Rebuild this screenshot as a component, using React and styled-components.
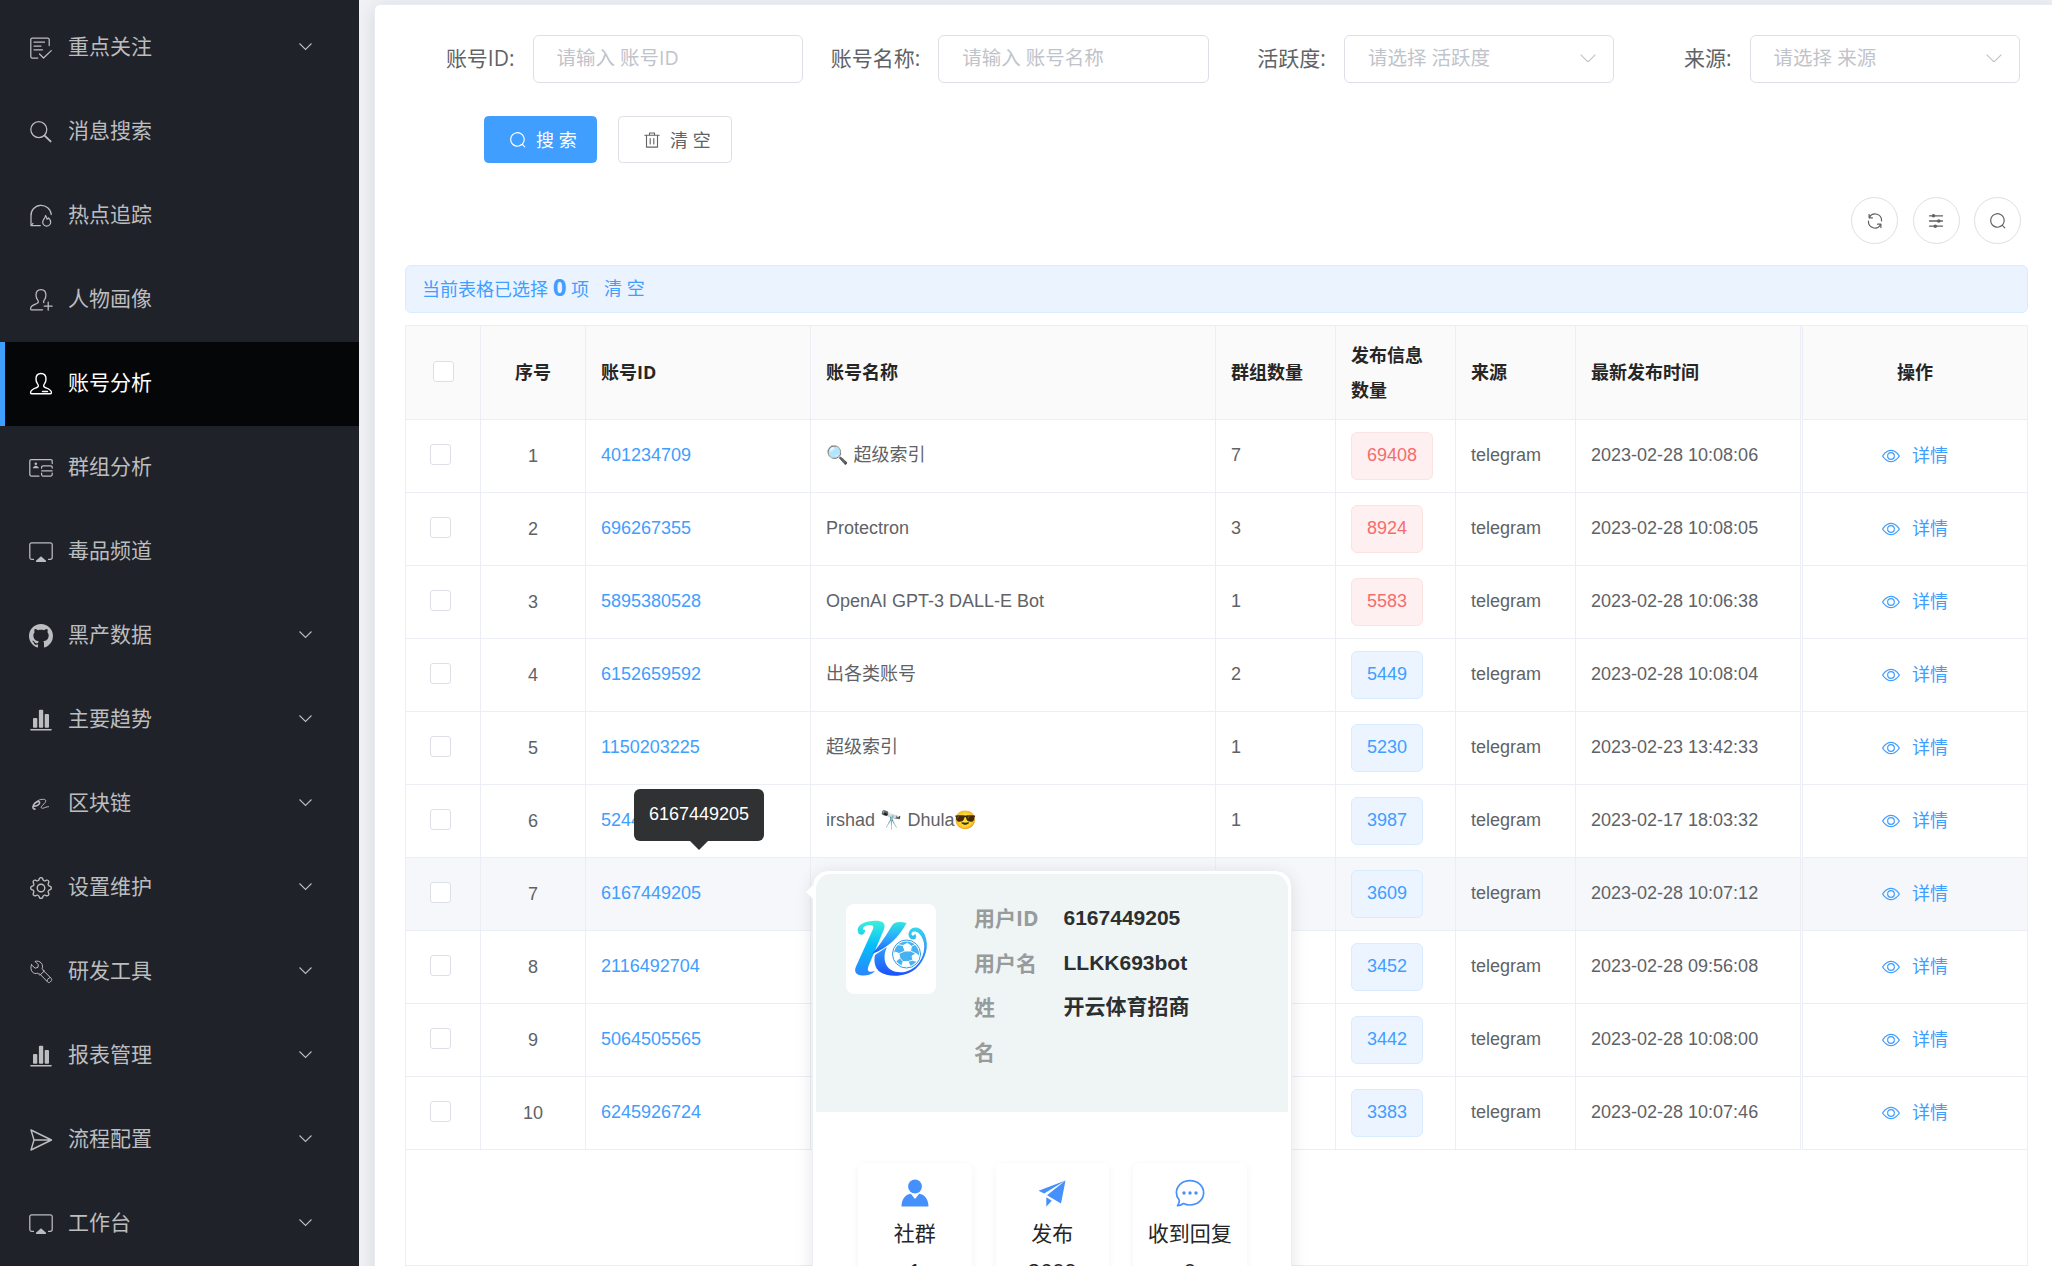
import React from "react";
import styled, { createGlobalStyle, css } from "styled-components";
import { BsGear } from "react-icons/bs";

const latin = `"Liberation Sans", "Noto Sans CJK SC", "Noto Color Emoji", sans-serif`;
const mixed = `"Open Sans", "Noto Sans CJK SC", sans-serif`;

const GlobalStyle = createGlobalStyle`
  *, *::before, *::after { box-sizing: border-box; }
  html, body { margin: 0; height: 100%; overflow: hidden; }
  body { background: #f0f2f5; font-family: ${latin}; color: #606266; font-size: 18px; }
`;

const Page = styled.div`
  position: relative;
  display: flex;
  width: 2052px;
  height: 1266px;
  overflow: hidden;
  background: #f0f1f5;
`;

/* ---------- sidebar ---------- */
const Sidebar = styled.nav`
  flex: none;
  width: 359px;
  padding-top: 6px;
  background: #20222a;
  z-index: 1;
`;

const MenuItem = styled.div`
  display: flex;
  align-items: center;
  height: 84px;
  padding: 0 47px 0 29px;
  color: ${(p) => (p.$active ? "#fff" : "#bcbdbf")};
  ${(p) =>
    p.$active &&
    css`
      background: #050608;
      box-shadow: inset 5px 0 0 #409eff;
    `}
  svg { display: block; flex: none; }
`;

const MenuLabel = styled.span`
  flex: 1;
  margin-left: 15px;
  font-size: 21px;
  line-height: 30px;
  padding-bottom: 2px;
`;

const ChevronBox = styled.span`
  padding-bottom: 2px;
`;

/* ---------- main card ---------- */
const Main = styled.main`
  flex: none;
  width: 1700px;
  padding: 4px 0 0 15px;
`;

const Card = styled.section`
  width: 1685px;
  height: 1300px;
  padding: 30px;
  border: 1px solid #e6ebf5;
  border-radius: 6px;
  background: #fff;
  box-shadow: 0 3px 18px rgba(0, 0, 0, 0.1);
`;

const SearchForm = styled.div`
  display: grid;
  grid-template-columns: repeat(4, 405.7px);
`;

const Field = styled.label`
  display: flex;
  align-items: center;
  height: 48px;
`;

const FieldLabel = styled.span`
  flex: none;
  width: 127.5px;
  padding-right: 18px;
  padding-bottom: 2px;
  text-align: right;
  font-family: ${mixed};
  font-size: 21px;
  line-height: 30px;
  color: #606266;
`;

const FieldBox = styled.span`
  display: flex;
  align-items: center;
  justify-content: space-between;
  width: 270.5px;
  height: 48px;
  padding: 0 17px 2px 23px;
  border: 1px solid #dcdfe6;
  border-radius: 6px;
  font-family: ${mixed};
  font-size: 19.5px;
  line-height: 28px;
  color: #bfc3cb;
`;

const FormActions = styled.div`
  display: flex;
  gap: 21px;
  margin-top: 33px;
  padding-left: 79px;
`;

const Button = styled.button`
  display: flex;
  align-items: center;
  width: ${(p) => (p.$primary ? 113 : 114)}px;
  height: 47px;
  padding: 0 0 0 24px;
  gap: 9px;
  border: 1px solid ${(p) => (p.$primary ? "#409eff" : "#dcdfe6")};
  border-radius: 4.5px;
  background: ${(p) => (p.$primary ? "#409eff" : "#fff")};
  color: ${(p) => (p.$primary ? "#fff" : "#606266")};
  font-family: ${mixed};
  font-size: 18px;
  line-height: 24px;
  white-space: nowrap;
`;

const Toolbar = styled.div`
  display: flex;
  justify-content: flex-end;
  gap: 14.5px;
  margin-top: 34px;
  padding-right: 7px;
`;

const RoundButton = styled.button`
  display: grid;
  place-items: center;
  width: 47px;
  height: 47px;
  padding: 0;
  border: 1px solid #dcdfe6;
  border-radius: 50%;
  background: #fff;
  color: #606266;
`;

const SelectionBar = styled.div`
  display: flex;
  align-items: center;
  height: 48px;
  margin-top: 21px;
  padding: 0 16px 2px;
  border: 1px solid #d9ecff;
  border-radius: 6px;
  background: #ebf3ff;
  color: #409eff;
  font-family: ${mixed};
  font-size: 18px;
  line-height: 34px;
  white-space: pre;
`;

const SelectionCount = styled.b`
  font-size: 24px;
  font-weight: 700;
`;

const ClearLink = styled.a`
  margin-left: 15px;
`;

/* ---------- table ---------- */
const Table = styled.div`
  height: 941px;
  margin-top: 12px;
  border: 1px solid #ebeef5;
`;

const columns = "75px 105px 225px 405px 120px 120px 120px 225px 1fr";

const Row = styled.div`
  display: grid;
  grid-template-columns: ${columns};
  height: 73px;
  background: ${(p) => (p.$hover ? "#f5f7fa" : "#fff")};
`;

const HeadRow = styled(Row)`
  height: 94px;
  background: #fafafa;
  color: #262626;
  font-weight: 700;
  font-family: ${mixed};
`;

const Cell = styled.div`
  display: flex;
  align-items: center;
  justify-content: ${(p) => (p.$center ? "center" : "flex-start")};
  min-width: 0;
  padding: ${(p) => (p.$center ? "0" : "0 15px")};
  padding-bottom: ${(p) => p.$lift || 0}px;
  border-right: 1px solid #ebeef5;
  border-bottom: 1px solid #ebeef5;
  font-size: 18px;
  line-height: 34.5px;
  color: inherit;
`;

const ActionCell = styled(Cell)`
  gap: 12px;
  margin-left: 1px;
  border-left: 1px solid #ebeef5;
  border-right: 0;
  box-shadow: -1px 1px 0 -0px transparent;
`;

const Checkbox = styled.span`
  width: 21px;
  height: 21px;
  margin-right: ${(p) => (p.$shift ? 5 : 0)}px;
  border: 1px solid #dcdfe6;
  border-radius: 3px;
  background: #fff;
`;

const IdLink = styled.a`
  color: #409eff;
`;

const Tag = styled.span`
  height: 48px;
  padding: 0 15px;
  border: 1px solid ${(p) => (p.$danger ? "#fde2e2" : "#d9ecff")};
  border-radius: 6px;
  background: ${(p) => (p.$danger ? "#fef0f0" : "#ecf5ff")};
  color: ${(p) => (p.$danger ? "#f56c6c" : "#409eff")};
  line-height: 44px;
`;

const DetailLink = styled.a`
  display: flex;
  align-items: center;
  gap: 12px;
  color: #409eff;
`;

/* ---------- overlays ---------- */
const Tooltip = styled.div`
  position: absolute;
  left: 634px;
  top: 789px;
  width: 130px;
  height: 52px;
  border-radius: 6px;
  background: #303133;
  color: #fff;
  text-align: center;
  line-height: 50px;
  &::after {
    content: "";
    position: absolute;
    left: 56px;
    top: 52px;
    border: 9px solid transparent;
    border-top-color: #303133;
    border-bottom: 0;
  }
`;

const Popover = styled.aside`
  position: absolute;
  left: 812px;
  top: 870px;
  width: 480px;
  height: 600px;
  padding: 3px;
  border: 1px solid #ebeef5;
  border-radius: 16px;
  background: #fff;
  box-shadow: 0 3px 18px rgba(0, 0, 0, 0.1);
  &::before {
    content: "";
    position: absolute;
    left: -7px;
    top: 14px;
    border: 7px solid transparent;
    border-right-color: #fff;
    border-left: 0;
  }
`;

const Profile = styled.div`
  display: flex;
  height: 238px;
  padding: 30px 30px 0;
  border-radius: 15px 15px 0 0;
  background: #eff5f5;
`;

const Avatar = styled.div`
  width: 90px;
  height: 90px;
  border-radius: 8px;
  background: #fff;
  overflow: hidden;
`;

const ProfileFields = styled.dl`
  display: grid;
  grid-template-columns: 68px auto;
  align-content: start;
  column-gap: 21.5px;
  margin: -8px 0 0 38px;
  font-size: 21px;
  font-weight: 700;
  line-height: 44.5px;
`;

const Term = styled.dt`
  width: ${(p) => (p.$narrow ? "30px" : "auto")};
  font-family: ${mixed};
  color: #979b9b;
`;

const Value = styled.dd`
  margin: 0;
  color: #2c2f30;
`;

const Stats = styled.div`
  display: grid;
  grid-template-columns: repeat(3, 113.5px);
  gap: 24px;
  margin: 51px 0 0 42px;
`;

const Stat = styled.div`
  display: flex;
  flex-direction: column;
  align-items: center;
  height: 160px;
  padding-top: 16px;
  border-radius: 6px;
  background: #fff;
  box-shadow: 0 2px 8px rgba(0, 0, 0, 0.05);
  color: #262626;
  svg { display: block; }
`;

const StatLabel = styled.span`
  margin-top: 11px;
  font-size: 21px;
  line-height: 31px;
  white-space: nowrap;
`;

const StatValue = styled.span`
  margin-top: 8px;
  font-size: 22px;
  line-height: 30px;
`;

/* ---------- icons ---------- */
const Stroke = ({ children, size = 24, w = 1.25, box = 24 }) => (
  <svg width={size} height={size} viewBox={`0 0 ${box} ${box}`} fill="none" stroke="currentColor" strokeWidth={w} strokeLinecap="round" strokeLinejoin="round">
    {children}
  </svg>
);

const menuIcons = {
  list: (
    <Stroke>
      <path d="M8.8 22H3.4a1.6 1.6 0 0 1-1.6-1.6V3.6A1.6 1.6 0 0 1 3.4 2h15.2a1.6 1.6 0 0 1 1.6 1.6v6M5 6.2h10.5M5 10h7M5 13.8h8.5M10.5 18l4 4 7.8-7.4" />
    </Stroke>
  ),
  search: (
    <Stroke>
      <circle cx="9.8" cy="9.6" r="8" />
      <path d="M15.6 15.6l6 5.8" strokeWidth="1.9" />
    </Stroke>
  ),
  hot: (
    <Stroke>
      <path d="M2 21.6V12A10 9.8 0 0 1 22.2 10.500M2 21.6h9.300M2 21.6l2-2.2" />
      <path d="M16.600 11.500c1 1.400 1.500 2.400 1.400 3.700 .8-.1 1.300-.6 1.500-1.300 1.400 1.400 2.200 2.700 2.200 4.100a4 4 0 0 1-8 0c0-2.500 2.600-3.600 2.900-6.500z" />
    </Stroke>
  ),
  personAdd: (
    <Stroke>
      <path d="M14.900 14.600c-1-.9-.3-1.800.7-3 .9-1.200 1.300-2.700 1.300-4.500C16.900 3.600 15 1.500 12 1.500S7 3.600 7 7.100c0 1.800.5 3.300 1.400 4.500 1.300 1.700 1.500 3-.6 3.900-3 1.200-5.600 2-6.100 4.300-.3 1.700.2 2 .8 2h11M15.200 18h8M19.200 14v8.200" />
    </Stroke>
  ),
  person: (
    <Stroke w={1.4}>
      <path d="M12 1.500c-3 0-5 2.100-5 5.600 0 1.800.5 3.300 1.400 4.500 1.300 1.700 1.500 3-.6 3.900-3 1.200-5.600 2-6.100 4.300-.3 1.700.2 2 .8 2h19c.6 0 1.100-.3.8-2-.5-2.300-3.100-3.100-6.100-4.300-2.100-.9-1.900-2.200-.6-3.900.9-1.200 1.400-2.700 1.400-4.500 0-3.500-2-5.600-5-5.600zM13.500 19.500h5" />
    </Stroke>
  ),
  idCard: (
    <Stroke>
      <path d="M10 20H2.200A1.400 1.400 0 0 1 .8 18.600V5A1.400 1.400 0 0 1 2.200 3.600h19.600A1.400 1.400 0 0 1 23.200 5v2.500M23.200 12v-.8A1.400 1.400 0 0 0 21.800 9.800H14A1.400 1.400 0 0 0 12.600 11.200v1M12.600 14.800h10.600M12.600 17.200v1.400A1.400 1.400 0 0 0 14 20h7.800a1.400 1.400 0 0 0 1.400-1.400v-1.400" />
      <circle cx="6.800" cy="7.800" r="1.300" fill="currentColor" stroke="none" />
      <path d="M3.800 12.200c0-1.700 1.800-1.600 2.300-2.500h1.400c.5.900 2.300.8 2.300 2.500z" fill="currentColor" stroke="none" />
    </Stroke>
  ),
  screen: (
    <Stroke>
      <path d="M4.500 19.300H2.600A1.800 1.800 0 0 1 .8 17.500V4.700a1.800 1.800 0 0 1 1.800-1.800h18.800a1.800 1.800 0 0 1 1.800 1.800v12.800a1.800 1.800 0 0 1-1.800 1.800h-1.900" />
      <path d="M12 16.200l5 4.500v1.200H7v-1.200z" fill="currentColor" stroke="none" />
    </Stroke>
  ),
  github: (
    <svg width="24" height="24" viewBox="0 0 16 16" fill="currentColor">
      <path d="M8 0C3.580 0 0 3.580 0 8c0 3.540 2.290 6.530 5.470 7.590.4.070.55-.17.55-.38 0-.19-.01-.82-.01-1.490-2.010.37-2.530-.49-2.690-.94-.09-.23-.48-.94-.82-1.130-.28-.15-.68-.52-.01-.53.63-.01 1.080.58 1.230.82.72 1.210 1.870.87 2.330.66.07-.52.28-.87.51-1.070-1.780-.2-3.640-.89-3.640-3.950 0-.87.31-1.590.82-2.150-.08-.2-.36-1.020.08-2.120 0 0 .67-.21 2.200.82.64-.18 1.320-.27 2-.27s1.360.09 2 .27c1.530-1.040 2.200-.82 2.200-.82.44 1.100.16 1.920.08 2.120.51.56.82 1.270.82 2.150 0 3.070-1.870 3.750-3.650 3.950.29.25.54.73.54 1.480 0 1.070-.01 1.930-.01 2.200 0 .21.15.46.55.38A8.010 8.010 0 0 0 16 8c0-4.420-3.580-8-8-8z" />
    </svg>
  ),
  bars: (
    <svg width="24" height="24" viewBox="0 0 24 24" fill="currentColor">
      <rect x="4" y="10" width="4.300" height="9.800" rx="1" />
      <rect x="9.900" y="1.800" width="4.300" height="18" rx="1" />
      <rect x="15.700" y="6" width="4.300" height="13.800" rx="1" />
      <rect x="1.200" y="21" width="21.600" height="1.500" rx=".7" />
    </svg>
  ),
  chain: (
    <Stroke w={1}>
      <path d="M4.200 14.200c3.500.1 7-1.800 6.400-3.900-.8-1.900-4.900.2-6.200 3-1.100 2.500-.2 4 1.600 3.800" strokeWidth="1.600" />
      <path d="M5.500 11.500C8 8.200 12.500 6.600 15.800 7.600c2 .8.800 3-2.300 5.700-2.200 2-1.400 3.300.6 2.900 2-.5 3.600-1.700 5.400-1.500" />
    </Stroke>
  ),
  gear: <BsGear size={22} style={{ margin: 1 }} />,
  wrench: (
    <Stroke w={1}>
      <path d="M2.400 4.800l3.700 3.400 2.800-.8.400-2.700-3.300-3.300c2.300-.7 4.800-.1 6.300 1.700 1.500 1.800 1.500 3.700.8 5.600l2.200 2.300-4.400 4.200-2.100-2c-2 .8-4.300.2-5.700-1.500C1.700 9.900 1.700 7 2.400 4.800zM14 10.200l8.200 8.200c.8.800.7 1.800 0 2.600l-1 1c-.8.800-1.800.8-2.600 0l-7.900-8.200M18 20.800c.4-1.700 1.500-2.800 3.200-3.200" />
    </Stroke>
  ),
  send: (
    <Stroke w={1.4}>
      <path d="M2 2l20.500 10L2 22l3-10zM5 12h17" />
    </Stroke>
  ),
};

const Chevron = ({ w = 13, sw = 1.1 }) => (
  <svg width={w} height={w / 1.8} viewBox="0 0 18 10" fill="none" stroke="currentColor" strokeWidth={sw * (18 / w)}>
    <path d="M.7.700L9 9l8.300-8.300" />
  </svg>
);

const SearchIcon = ({ size = 18 }) => (
  <svg width={size} height={size} viewBox="0 0 1024 1024" fill="currentColor">
    <path d="M795.904 750.720l124.992 124.928a32 32 0 0 1-45.248 45.248L750.656 795.904a416 416 0 1 1 45.248-45.248zM480 832a352 352 0 1 0 0-704 352 352 0 0 0 0 704z" />
  </svg>
);

const TrashIcon = () => (
  <Stroke size={18} box={18} w={1.1}>
    <path d="M1.800 4.300h14.400M3.500 4.300v11.800h11V4.300M6.500 4V2h5v2M7.200 7.500v5.500M10.800 7.500v5.500" />
  </Stroke>
);

const RefreshIcon = () => (
  <Stroke size={18} box={18} w={1.2}>
    <path d="M3.400 5.200A6.500 6.500 0 0 1 15.500 9M3.100 2.400v3.400h3.400M14.600 12.800A6.500 6.500 0 0 1 2.500 9M14.900 15.600v-3.400h-3.400" />
  </Stroke>
);

const SlidersIcon = () => (
  <Stroke size={18} box={18} w={1.3}>
    <path d="M2.500 3.800h13M2.500 9h13M2.500 14.200h13" />
    <g fill="currentColor" stroke="none">
      <circle cx="6.500" cy="3.800" r="1.800" />
      <circle cx="11.800" cy="9" r="1.800" />
      <circle cx="8.300" cy="14.200" r="1.800" />
    </g>
  </Stroke>
);

const EyeIcon = () => (
  <svg width="18" height="18" viewBox="0 0 1024 1024" fill="currentColor">
    <path d="M512 160c320 0 512 352 512 352S832 864 512 864 0 512 0 512s192-352 512-352zm0 64c-225.280 0-384.128 208.064-436.800 288 52.608 79.872 211.456 288 436.800 288 225.280 0 384.128-208.064 436.800-288-52.608-79.872-211.456-288-436.800-288zm0 64a224 224 0 1 1 0 448 224 224 0 0 1 0-448zm0 64a160.192 160.192 0 0 0-160 160c0 88.192 71.744 160 160 160s160-71.808 160-160-71.744-160-160-160z" />
  </svg>
);

const CommunityIcon = () => (
  <svg width="28" height="28" viewBox="0 0 28 28" fill="#4690fd">
    <circle cx="14" cy="7.500" r="6.900" />
    <path d="M.5 27.500C.7 20 4 15.800 9.800 14.800L14 20l4.200-5.200c5.800 1 9.100 5.200 9.300 12.700z" />
  </svg>
);

const PublishIcon = () => (
  <svg width="28" height="28" viewBox="0 0 28 28" fill="#4690fd">
    <path d="M27.500 1.500L.5 11.800l5.700 2.800zM27.500 1.500L9 16.200l14 8.300zM8.300 18.300v9.500l5.500-6z" />
  </svg>
);

const ReplyIcon = () => (
  <svg width="30" height="28" viewBox="0 0 30 28" fill="none" stroke="#4690fd" strokeWidth="1.700" strokeLinejoin="round">
    <path d="M15 1.600c7.700 0 13.600 5.300 13.600 12.200S22.700 26 15 26c-2.400 0-4.600-.5-6.600-1.500-1.900 1.600-3.900 2.200-5.900 2.200 1.300-1.600 1.900-3.300 1.800-5.400C2.400 19.200 1.400 16.700 1.400 13.800 1.400 6.900 7.300 1.600 15 1.600z" />
    <g fill="#4690fd" stroke="none">
      <circle cx="9" cy="14" r="1.700" />
      <circle cx="15" cy="14" r="1.700" />
      <circle cx="21" cy="14" r="1.700" />
    </g>
  </svg>
);

const ClubLogo = () => (
  <svg width="90" height="90" viewBox="0 0 90 90">
    <defs>
      <linearGradient id="stem" x1="0" y1="0" x2="0" y2="1">
        <stop offset="0" stopColor="#3df0dc" />
        <stop offset=".45" stopColor="#06bdfb" />
        <stop offset="1" stopColor="#2a86ff" />
      </linearGradient>
      <linearGradient id="arm" x1="0" y1="0" x2="0" y2="1">
        <stop offset="0" stopColor="#2fe6e2" />
        <stop offset=".6" stopColor="#2a9bff" />
        <stop offset="1" stopColor="#1d55fb" />
      </linearGradient>
      <linearGradient id="leg" x1="0" y1="0" x2="0" y2="1">
        <stop offset="0" stopColor="#36d8f0" />
        <stop offset="1" stopColor="#1d50ff" />
      </linearGradient>
      <clipPath id="ball"><circle cx="60.500" cy="50" r="12.800" /></clipPath>
    </defs>
    <path fill="url(#stem)" d="M12 28c-2-8 9-11.500 19-11.200 6 .2 9 3 7 8.500L22.500 62c-2 5.500.5 6.800 6.500 5-4 4.500-10 5-15 4.200-4.500-.9-6-4.200-4-8.700L27 25c1.500-4-2-4.800-6.500-3.500-3 1-4.200 3-3 4.500 2-.8 2.200 1.500.4 3.500-2 2-5 1.500-5.900-1.500z" />
    <path fill="url(#arm)" d="M26 50c8-9 15-20 20-28.500 2-3.500 8-4.300 14.500-2.500C54 32 42 44 26 50z" />
    <path fill="url(#leg)" d="M29 51c4-3 8-5 12-8-4 8-3 17 2 21.500 9 7 23 4 30-6 7-10 7-22 0-29-4-3.500-8-2-7.500.8.400 2 3 1.500 3.300-.6 2.500 2 1.500 5.700-1.600 5.800-4.300 0-6.300-5.500-3-9.500 4-4.700 11.500-2.300 14.500 4.500 5 11.500 1 25-8.700 34C60 73.500 42 73.500 34 68c-5-3.700-6.500-10.500-5-17z" />
    <circle cx="60.500" cy="50" r="14" fill="#fff" stroke="#2b9df0" strokeWidth="1" />
    <circle cx="60.500" cy="50" r="12.500" fill="#46b2f2" />
    <g clipPath="url(#ball)" fill="#fff" stroke="#fff" strokeWidth=".9">
      <path d="M57 41.500l4.500-2.200 4 3-1 4.700h-5.500z" />
      <path d="M49 48l4 1.500.8 4.500-3.500 3-4-4z" />
      <path d="M66 52l4-2.500 4 3-2.500 5-4.500-1z" />
      <path d="M57 57.500h5l2 4-3.500 3.500-5-2.500z" />
      <path fill="none" d="M59 47l-6 2.500M64.500 47l5.500 2.500M53.800 54l3.200 3.500M62 57.500l5-1.500M57 41.500l-6-1M65.500 42.300l4-2" />
    </g>
  </svg>
);

/* ---------- data ---------- */
const menu = [
  ["list", "重点关注", true],
  ["search", "消息搜索"],
  ["hot", "热点追踪"],
  ["personAdd", "人物画像"],
  ["person", "账号分析"],
  ["idCard", "群组分析"],
  ["screen", "毒品频道"],
  ["github", "黑产数据", true],
  ["bars", "主要趋势", true],
  ["chain", "区块链", true],
  ["gear", "设置维护", true],
  ["wrench", "研发工具", true],
  ["bars", "报表管理", true],
  ["send", "流程配置", true],
  ["screen", "工作台", true],
];

const fields = [
  ["账号ID:", "请输入 账号ID"],
  ["账号名称:", "请输入 账号名称"],
  ["活跃度:", "请选择 活跃度", true],
  ["来源:", "请选择 来源", true],
];

const rows = [
  ["401234709", "🔍 超级索引", "7", "69408", "2023-02-28 10:08:06", true],
  ["696267355", "Protectron", "3", "8924", "2023-02-28 10:08:05", true],
  ["5895380528", "OpenAI GPT-3 DALL-E Bot", "1", "5583", "2023-02-28 10:06:38", true],
  ["6152659592", "出各类账号", "2", "5449", "2023-02-28 10:08:04"],
  ["1150203225", "超级索引", "1", "5230", "2023-02-23 13:42:33"],
  ["5244", "irshad 🔭 Dhula😎", "1", "3987", "2023-02-17 18:03:32"],
  ["6167449205", "", "", "3609", "2023-02-28 10:07:12"],
  ["2116492704", "", "", "3452", "2023-02-28 09:56:08"],
  ["5064505565", "", "", "3442", "2023-02-28 10:08:00"],
  ["6245926724", "", "", "3383", "2023-02-28 10:07:46"],
];

export default function App() {
  return (
    <Page lang="zh-CN">
      <GlobalStyle />
      <Sidebar>
        {menu.map(([icon, label, open]) => (
          <MenuItem key={label} $active={label === "账号分析"}>
            {menuIcons[icon]}
            <MenuLabel>{label}</MenuLabel>
            {open && <ChevronBox><Chevron /></ChevronBox>}
          </MenuItem>
        ))}
      </Sidebar>

      <Main>
        <Card>
          <SearchForm>
            {fields.map(([label, hint, select]) => (
              <Field key={label}>
                <FieldLabel>{label}</FieldLabel>
                <FieldBox>
                  {hint}
                  {select && <Chevron w={16} />}
                </FieldBox>
              </Field>
            ))}
          </SearchForm>
          <FormActions>
            <Button $primary><SearchIcon />搜 索</Button>
            <Button><TrashIcon />清 空</Button>
          </FormActions>
          <Toolbar>
            <RoundButton><RefreshIcon /></RoundButton>
            <RoundButton><SlidersIcon /></RoundButton>
            <RoundButton><SearchIcon /></RoundButton>
          </Toolbar>
          <SelectionBar>
            <span>当前表格已选择 <SelectionCount>0</SelectionCount> 项</span>
            <ClearLink>清 空</ClearLink>
          </SelectionBar>

          <Table>
            <HeadRow>
              <Cell $center $lift={3}><Checkbox /></Cell>
              <Cell $center>序号</Cell>
              <Cell>账号ID</Cell>
              <Cell>账号名称</Cell>
              <Cell>群组数量</Cell>
              <Cell>发布信息数量</Cell>
              <Cell>来源</Cell>
              <Cell>最新发布时间</Cell>
              <ActionCell $center>操作</ActionCell>
            </HeadRow>
            {rows.map(([id, name, groups, posts, time, danger], i) => (
              <Row key={id} $hover={i === 6}>
                <Cell $center $lift={3}><Checkbox $shift /></Cell>
                <Cell $center>{i + 1}</Cell>
                <Cell $lift={2}><IdLink>{id}</IdLink></Cell>
                <Cell $lift={2}>{name}</Cell>
                <Cell $lift={2}>{groups}</Cell>
                <Cell><Tag $danger={danger}>{posts}</Tag></Cell>
                <Cell $lift={2}>telegram</Cell>
                <Cell $lift={2}>{time}</Cell>
                <ActionCell $center>
                  <DetailLink><EyeIcon />详情</DetailLink>
                </ActionCell>
              </Row>
            ))}
          </Table>
        </Card>
      </Main>

      <Tooltip>6167449205</Tooltip>

      <Popover>
        <Profile>
          <Avatar><ClubLogo /></Avatar>
          <ProfileFields>
            <Term>用户ID</Term>
            <Value>6167449205</Value>
            <Term>用户名</Term>
            <Value>LLKK693bot</Value>
            <Term $narrow>姓 名</Term>
            <Value>开云体育招商</Value>
          </ProfileFields>
        </Profile>
        <Stats>
          <Stat><CommunityIcon /><StatLabel>社群</StatLabel><StatValue>1</StatValue></Stat>
          <Stat><PublishIcon /><StatLabel>发布</StatLabel><StatValue>3609</StatValue></Stat>
          <Stat><ReplyIcon /><StatLabel>收到回复</StatLabel><StatValue>0</StatValue></Stat>
        </Stats>
      </Popover>
    </Page>
  );
}
